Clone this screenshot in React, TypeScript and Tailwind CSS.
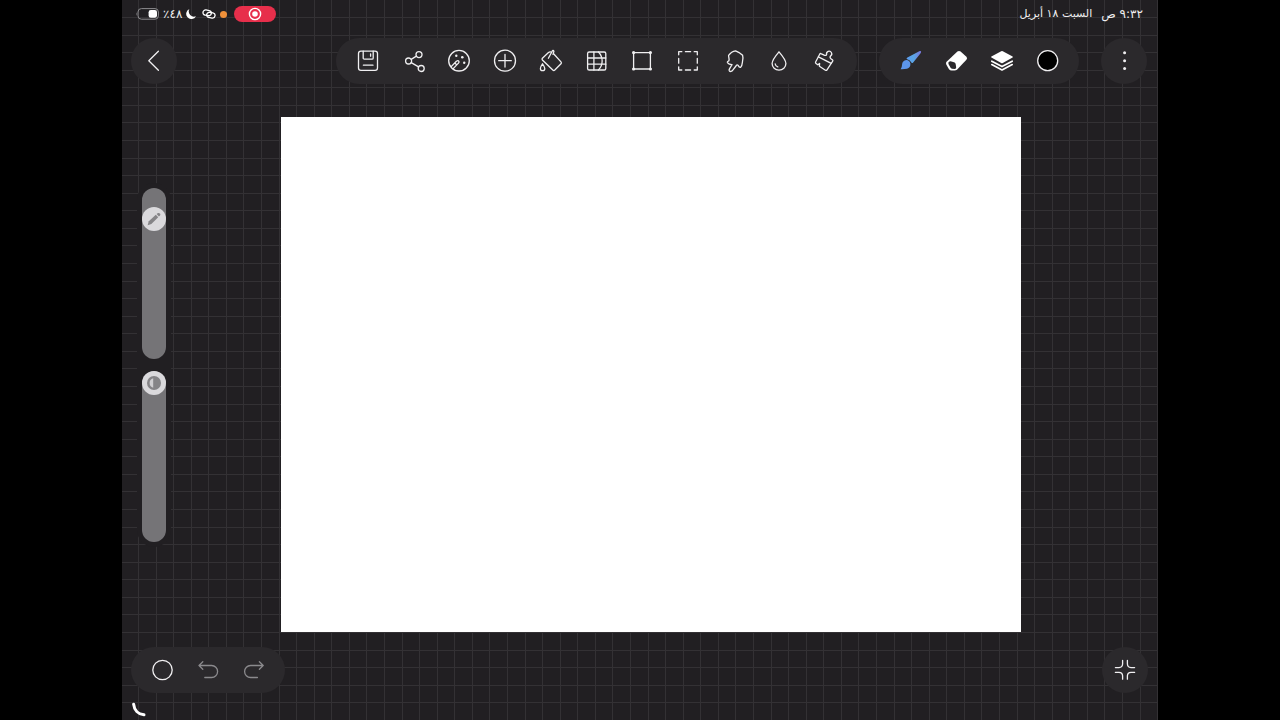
import { useState, ReactNode } from 'react';

interface IconProps {
	children: ReactNode;
	className?: string;
}

// all the toolbar icons are drawn around 0,0
function Icon({ children, className = '' }: IconProps) {
	return (
		<svg
			viewBox="-12 -12 24 24"
			className={`size-6 ${className}`}
			fill="none"
			stroke="currentColor"
			strokeWidth="1.3"
			strokeLinecap="round"
			strokeLinejoin="round"
			aria-hidden="true"
		>
			{children}
		</svg>
	)
}

interface Tool {
	name: string;
	icon: ReactNode;
}

const tools: Tool[] = [
	{
		name: 'حفظ',
		icon: (
			<Icon>
				<rect x="-9.5" y="-9.8" width="19" height="19.2" rx="2.4" />
				<path d="M-4.8 -9.8V-3q0 1.2 1.2 1.2H4Q5.2 -1.8 5.2 -3V-9.8M2.6 -7V-4.8M-4.6 4.2H5" />
			</Icon>
		),
	},
	{
		name: 'مشاركة',
		icon: (
			<Icon>
				<circle cx="-5.4" cy="0" r="3" />
				<circle cx="5" cy="-6.4" r="3" />
				<circle cx="7.2" cy="7.5" r="3" />
				<path d="M-2.8 -1.6L2.4 -4.9M-2.8 1.6L4.6 5.9" />
			</Icon>
		),
	},
	{
		name: 'الألوان',
		icon: (
			<Icon>
				<circle cx="0" cy="-.3" r="10.3" />
				<path d="M-7.8 5.6L-2.6 .2Q-.9 -.9 -.1 .3Q.4 1.5 -.8 2.4L-5.8 7.6M-4.2 1.9L-2.4 3.7" />
				<g fill="currentColor" stroke="none">
					<circle cx="-2.7" cy="-5.2" r="1.2" />
					<circle cx="3.3" cy="-3.8" r="1.3" />
					<circle cx="5.2" cy="1.8" r="1.2" />
				</g>
			</Icon>
		),
	},
	{
		name: 'إضافة',
		icon: (
			<Icon>
				<circle cx="0" cy="-.3" r="10.5" />
				<path d="M-6.3 -.3H6.3M0 -6.6V6" />
			</Icon>
		),
	},
	{
		name: 'تعبئة',
		icon: (
			<Icon>
				<path d="M-2.8 -8.2L-8.6 -2.7Q-9.4 -1.8 -8.6 -1L1.8 9Q2.8 9.9 3.8 9L10 2.8Q10.9 1.9 10 .9L2.6 -7.2M-2.8 -8.2Q-1.2 -9.6 .4 -8.8" />
				<path d="M-2.6 -2.8L.9 -9.2Q2 -11.6 2.9 -9.8L2 -6.6" />
				<path d="M-8.5 2.8Q-10.8 6 -10.6 7.4A2.2 2.2 0 0 0 -6.2 7.4Q-6.2 6 -8.5 2.8Z" />
			</Icon>
		),
	},
	{
		name: 'شبكة',
		icon: (
			<Icon>
				<rect x="-9.4" y="-9" width="18.2" height="18" rx="1.6" />
				<path d="M-3.1 -9V9M-9.4 -3H8.8M-9.4 3.2H8.8M1.4 -9C6.4 -4 6.4 4 1.4 9" />
			</Icon>
		),
	},
	{
		name: 'تحويل',
		icon: (
			<Icon>
				<rect x="-8.4" y="-8.4" width="16.8" height="16.4" />
				<g fill="currentColor" stroke="none">
					<circle cx="-8.4" cy="-8.4" r="1.6" />
					<circle cx="8.4" cy="-8.4" r="1.6" />
					<circle cx="-8.4" cy="8" r="1.6" />
					<circle cx="8.4" cy="8" r="1.6" />
				</g>
			</Icon>
		),
	},
	{
		name: 'تحديد',
		icon: (
			<Icon>
				<path d="M-9.3 -6.2V-9.3H-6.2M-2.6 -9.3H2.6M6.2 -9.3H9.3V-6.2M9.3 -2.6V2.2M9.3 5.8V9H6.2M2.6 9H-2.6M-6.2 9H-9.3V5.8M-9.3 2.2V-2.6" />
			</Icon>
		),
	},
	{
		name: 'تلطيخ',
		icon: (
			<Icon>
				<path d="M-5.4 -5.6C-3.6 -8.2 -1.2 -9.8 1.6 -10.2C4.2 -9.2 6.8 -7.8 8.6 -5.8C9.4 -3.4 9 -1 8.4 1.4C8.2 3.4 7.8 5.2 6.6 6.4C5.2 6.8 4.6 5.4 4 4.2C3 3.4 2.4 4.2 2 5L-1.4 9.4C-2.4 10.8 -4 10.8 -4.8 9.6C-5.2 8.6 -4.6 7.8 -4 7L-2 3.6C-4 3.6 -5.6 3 -6.6 1.6C-7 .6 -6 .2 -5.2 -.2C-4.2 -1.8 -5.6 -3.6 -5.4 -5.6Z" />
			</Icon>
		),
	},
	{
		name: 'تمويه',
		icon: (
			<Icon>
				<path d="M0 -9.2Q-6.9 -1.2 -6.9 2.6A6.9 6.6 0 0 0 6.9 2.6Q6.9 -1.2 0 -9.2Z" />
				<path d="M-3.8 3Q-3.4 5.4 -1.2 5.9" />
			</Icon>
		),
	},
	{
		name: 'فرشاة عريضة',
		icon: (
			<Icon>
				<path d="M-6.6 -4.2L-5.2 -7Q-4.6 -7.8 -3.6 -7.2L-.8 -5.8Q1 -5 1.6 -6.6A2.6 2.6 0 1 1 5.8 -5.2Q4.4 -3.8 5.6 -2.6L7.6 -1Q8.2 -.4 7.6 .4L6.2 2.4Z" />
				<path d="M-6.6 -4.2L-9.4 1Q-9.8 1.8 -9 2.4L-7.2 3.8L-5.4 2.4L-5.6 5.2L.4 9.2Q1.4 9.8 2 8.8L6.2 2.4" />
			</Icon>
		),
	},
]

const brushTools: Tool[] = [
	{
		name: 'فرشاة',
		icon: (
			<Icon>
				<defs>
					<linearGradient id="brush" x1="0" y1="0" x2="1" y2="0">
						<stop offset="0" stopColor="#5b9bf0" />
						<stop offset=".5" stopColor="#5aa5e4" />
						<stop offset="1" stopColor="#7a74dc" />
					</linearGradient>
				</defs>
				<g stroke="none">
					<path fill="url(#brush)" d="M9.8 -10Q11.8 -10.6 10.8 -8L3.4 1.2Q1.8 3 1 1Q-.2 -1.4 -2.8 -1.8Q-4.4 -2.4 -2.6 -3.6Z" />
					<path fill="#5c95ec" d="M-3.6 -.9Q-.4 -.6 .4 2.4Q.6 6.6 -3 7.8Q-6 8.4 -9.4 8.2Q-8 6.6 -8 4Q-7.6 -.6 -3.6 -.9Z" />
				</g>
			</Icon>
		),
	},
	{
		name: 'ممحاة',
		icon: (
			<Icon>
				<path fill="#fff" stroke="none" d="M1.4 -9.4Q3 -10.8 4.6 -9.4L10.4 -4.2Q11.8 -2.8 10.4 -1.2L1 8.8Q0 9.6 -1.4 9.6H-4.4Q-6 9.6 -7 8.2L-9.6 3.8Q-10.6 2 -9.4 .8Z" />
				<path fill="#2b292c" stroke="none" d="M-7 .8Q-6.2 0 -4.6 .4L-2 1.2Q-.8 1.6 -.4 2.8L.2 6.2Q.2 7.8 -1.2 7.9L-4 7.8Q-5 7.6 -5.6 6.6L-7.4 3.2Q-8.2 1.8 -7 .8Z" />
			</Icon>
		),
	},
	{
		name: 'الطبقات',
		icon: (
			<Icon className="text-white">
				<path fill="currentColor" stroke="none" d="M-.8 -9.8Q0 -10.2 .8 -9.8L10.6 -4.6Q11.2 -4 10.6 -3.4L.8 2Q0 2.4 -.8 2L-10.6 -3.4Q-11.2 -4 -10.6 -4.6Z" />
				<path strokeWidth="1.7" d="M-10.2 .2L0 5.6L10.2 .2M-10.2 3.6L0 9L10.2 3.6" />
			</Icon>
		),
	},
	{
		name: 'اللون',
		icon: (
			<Icon>
				<circle cx="-.3" cy="-.3" r="10" fill="#000" />
			</Icon>
		),
	},
]

interface ToolButtonProps {
	tool: Tool;
	className: string;
}

function ToolButton({ tool, className }: ToolButtonProps) {
	return (
		<button type="button" aria-label={tool.name} className={`flex h-[46px] items-center justify-center ${className}`}>
			{tool.icon}
		</button>
	)
}

interface VerticalSliderProps {
	label: string;
	initial: number;
	children: ReactNode;
}

function VerticalSlider({ label, initial, children }: VerticalSliderProps) {
	const [value, setValue] = useState(initial);

	return (
		<div className="relative h-[171px] w-6">
			<input
				type="range"
				aria-label={label}
				value={value}
				onChange={(e) => setValue(Number(e.target.value))}
				className="block h-full w-6 appearance-none rounded-full bg-[#757477] [writing-mode:vertical-lr] [&::-webkit-slider-thumb]:size-6 [&::-webkit-slider-thumb]:appearance-none [&::-webkit-slider-thumb]:rounded-full [&::-webkit-slider-thumb]:bg-[#dad9dc]"
			/>
			<div
				className="pointer-events-none absolute left-0"
				style={{ top: `calc((100% - 24px) * ${value / 100})` }}
			>
				{children}
			</div>
		</div>
	)
}

function GridBackground() {
	const lines = [0, 18, 35, 53, 70, 88, 105];
	return (
		<svg className="absolute inset-0 size-full" aria-hidden="true">
			<defs>
				<pattern id="grid" x="16" y="17" width="123" height="123" patternUnits="userSpaceOnUse">
					{lines.map((n) => (
						<path key={n} d={`M${n + .5} 0V123M0 ${n + .5}H123`} stroke="#333134" strokeWidth="1" />
					))}
				</pattern>
			</defs>
			<rect width="100%" height="100%" fill="url(#grid)" />
		</svg>
	)
}

function StatusBar() {
	return (
		<div dir="rtl" className="flex h-7 items-center justify-between pr-[15px] pl-[13px] text-xs leading-4">
			<div className="flex items-center gap-[9px]">
				<span>٩:٣٢ ص</span>
				<span className="text-[11px]">السبت ١٨ أبريل</span>
			</div>
			<div className="flex items-center gap-1">
				<button type="button" aria-label="تسجيل الشاشة" className="ml-[3px] flex h-4 w-[42px] items-center justify-center rounded-full bg-[#e72f4b]">
					<svg viewBox="0 0 14 14" className="size-[14px]" fill="none" stroke="#fff" aria-hidden="true">
						<circle cx="7" cy="7" r="5.6" strokeWidth="1.4" />
						<circle cx="7" cy="7" r="2.8" fill="#fff" stroke="none" />
					</svg>
				</button>
				<span className="size-[7px] rounded-full bg-[#f0913a]" />
				<svg viewBox="0 0 14 10" className="h-[10px] w-[14px]" fill="none" stroke="#fff" strokeWidth="1.3" aria-hidden="true">
					<rect x=".9" y="1.2" width="8.4" height="5.2" rx="2.6" transform="rotate(10 5 4)" />
					<rect x="4.7" y="3.6" width="8.4" height="5.2" rx="2.6" transform="rotate(10 9 6)" />
				</svg>
				<svg viewBox="0 0 10 10" className="mr-0.5 size-[10px]" fill="#fff" aria-hidden="true">
					<path d="M3.4 0A5.2 5.2 0 1 0 10 7.2A5.2 5.2 0 0 1 3.4 0Z" />
				</svg>
				<span>٤٨٪</span>
				<svg viewBox="0 0 24 12" className="h-3 w-6" fill="none" aria-hidden="true">
					<rect x="3" y=".6" width="20.4" height="10.6" rx="3.4" stroke="#8d8c8f" strokeWidth="1" />
					<path d="M1.6 4.2Q.4 6 1.6 7.8Z" fill="#8d8c8f" />
					<rect x="13.6" y="2" width="8.4" height="7.8" rx="2.2" fill="#fff" />
				</svg>
			</div>
		</div>
	)
}

export default function App() {
	return (
		<div className="min-h-screen bg-black px-[122px] font-['DejaVu_Sans',sans-serif]">
			<div className="relative flex min-h-screen flex-col overflow-hidden bg-[#211f22] text-[#f0eff1]">
				<GridBackground />
				<div className="relative flex flex-1 flex-col">
					<StatusBar />
					<header className="flex items-center gap-[22px] pt-[10px] pr-[11px] pl-[9px]">
						<button type="button" aria-label="رجوع" className="mr-auto flex size-[46px] items-center justify-center rounded-full bg-[#2b292c]">
							<Icon>
								<path d="M4.4 -9.8L-5.2 -.3L4.4 9.2" />
							</Icon>
						</button>
						<nav aria-label="الأدوات" className="flex w-[521px] rounded-full bg-[#2b292c] px-[9px]">
							{tools.map((tool) => (
								<ToolButton key={tool.name} tool={tool} className="flex-1" />
							))}
						</nav>
						<nav aria-label="الرسم" className="flex rounded-full bg-[#2b292c] px-2">
							{brushTools.map((tool) => (
								<ToolButton key={tool.name} tool={tool} className="w-[46px]" />
							))}
						</nav>
						<button type="button" aria-label="المزيد" className="flex size-[46px] items-center justify-center rounded-full bg-[#2b292c]">
							<Icon>
								<g fill="currentColor" stroke="none">
									<circle cx=".6" cy="-8.2" r="1.5" />
									<circle cx=".6" cy="-.3" r="1.5" />
									<circle cx=".6" cy="7.6" r="1.5" />
								</g>
							</Icon>
						</button>
					</header>

					<main className="flex flex-1 pt-[33px] pr-[137px] pl-[15px]">
						<aside className="w-36 shrink-0 pt-[66px]">
							<div className="flex w-[34px] flex-col items-center gap-3 rounded-full bg-[#211f22] py-[5px]">
								<VerticalSlider label="حجم الفرشاة" initial={13}>
									<Icon className="text-[#858487]">
										<g fill="currentColor" stroke="none">
											<path d="M-6.4 6.2L-5.2 2.2L1.8 -4.2L4.2 -1.8L-2.6 5Z" />
											<path d="M2.6 -4.9L4 -6Q5 -6.4 6 -5.4Q6.8 -4.4 6 -3.6L4.9 -2.5Z" />
										</g>
									</Icon>
								</VerticalSlider>
								<VerticalSlider label="الشفافية" initial={0}>
									<Icon className="text-[#858487]">
										<circle cx="0" cy="0" r="7" fill="currentColor" stroke="none" />
										<path d="M-.8 -4.8A5 5 0 0 0 -.8 4.8Z" fill="#cfced1" stroke="none" />
									</Icon>
								</VerticalSlider>
							</div>
						</aside>
						<div role="img" aria-label="لوحة الرسم" className="flex-1 bg-white" />
					</main>

					<footer className="flex items-center justify-between pt-[15px] pr-[10px] pb-[27px] pl-[9px]">
						<div className="flex rounded-full bg-[#2b292c] px-2">
							<button type="button" aria-label="دائرة" className="flex size-[46px] items-center justify-center">
								<Icon>
									<circle cx=".5" cy="0" r="9.7" />
								</Icon>
							</button>
							<button type="button" aria-label="تراجع" className="flex size-[46px] items-center justify-center text-[#8b8a8d]">
								<Icon>
									<path d="M-5.2 -8.2L-9 -4.5L-5.2 -.8M-9 -4.5H3.6A6 6 0 0 1 3.6 7.5H-3.2" />
								</Icon>
							</button>
							<button type="button" aria-label="إعادة" className="flex size-[46px] items-center justify-center text-[#8b8a8d]">
								<Icon>
									<path d="M5.4 -8.2L9.2 -4.5L5.4 -.8M9.2 -4.5H-3.4A6 6 0 0 0 -3.4 7.5H3.4" />
								</Icon>
							</button>
						</div>
						<button type="button" aria-label="تصغير" className="flex size-[46px] items-center justify-center rounded-full bg-[#2b292c]">
							<Icon>
								<path d="M-2.4 -9.6V-6Q-2.6 -2.6 -6 -2.4H-9.6M2.4 -9.6V-6Q2.6 -2.6 6 -2.4H9.6M-2.4 9.2V5.8Q-2.6 2.6 -6 2.4H-9.6M2.4 9.2V5.8Q2.6 2.6 6 2.4H9.6" />
							</Icon>
						</button>
					</footer>
				</div>

				{/* corner handle */}
				<svg viewBox="0 0 20 20" className="absolute bottom-0 left-2 size-5" fill="none" aria-hidden="true">
					<path d="M3.6 4.2C4.2 10 8 14.2 14 14.8" stroke="#fff" strokeWidth="3" strokeLinecap="round" />
				</svg>
			</div>
		</div>
	)
}
